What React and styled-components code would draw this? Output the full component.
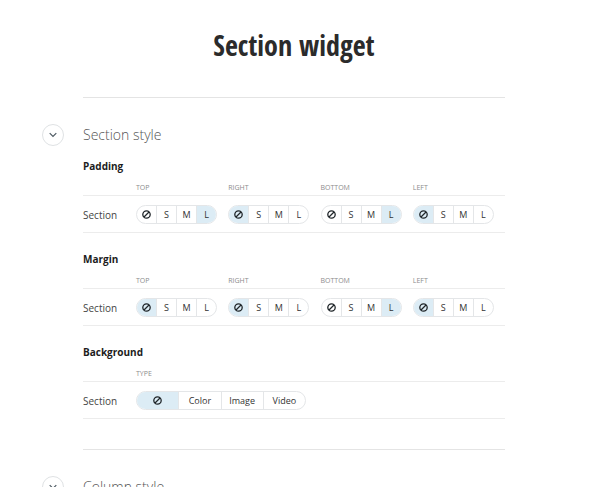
import React, { useState } from "react";
import styled, { createGlobalStyle } from "styled-components";

const SIZES = ["none", "S", "M", "L"];
const TYPES = ["none", "Color", "Image", "Video"];
const SIDES = ["Top", "Right", "Bottom", "Left"];

const App = () => {
  return (
    <>
      <GlobalStyle />
      <Page>
        <Title>Section widget</Title>
        <Section title="Section style">
          <StyleTable
            title="Padding"
            columns={SIDES}
            options={SIZES}
            initial={["L", "none", "L", "none"]}
          />
          <StyleTable
            title="Margin"
            columns={SIDES}
            options={SIZES}
            initial={["none", "none", "L", "none"]}
          />
          <StyleTable
            title="Background"
            columns={["Type"]}
            options={TYPES}
            initial={["none"]}
            wide
          />
        </Section>
        <Section title="Column style" />
      </Page>
    </>
  );
};

export default App;

const Section = ({ title, children }) => {
  const [isOpen, setIsOpen] = useState(true);

  return (
    <SectionContainer>
      <SectionHeader>
        <Toggle
          type="button"
          aria-label={title}
          aria-expanded={isOpen}
          onClick={() => setIsOpen(!isOpen)}
        >
          <svg width="8" height="6" viewBox="0 0 8 6" fill="none">
            <path d="M0.7 1.2L4 4.5L7.3 1.2" stroke="#4d5a62" strokeWidth="1.2" />
          </svg>
        </Toggle>
        <SectionTitle>{title}</SectionTitle>
      </SectionHeader>
      {isOpen && children}
    </SectionContainer>
  );
};

const StyleTable = ({ title, columns, options, initial, wide }) => {
  const [values, setValues] = useState(initial);

  const onChange = (index, value) =>
    setValues(values.map((v, i) => (i === index ? value : v)));

  return (
    <Group>
      <GroupTitle>{title}</GroupTitle>
      <Table>
        <thead>
          <tr>
            <CornerCell />
            {columns.map((column) => (
              <HeadCell key={column} scope="col">
                {column}
              </HeadCell>
            ))}
          </tr>
        </thead>
        <tbody>
          <tr>
            <RowLabel scope="row">Section</RowLabel>
            {columns.map((column, index) => (
              <Cell key={column}>
                <Segments
                  role="radiogroup"
                  aria-label={`${title} ${column}`}
                  $wide={wide}
                >
                  {options.map((option) => (
                    <Segment key={option}>
                      <Radio
                        type="radio"
                        name={`${title}-${column}`}
                        value={option}
                        aria-label={option}
                        checked={values[index] === option}
                        onChange={() => onChange(index, option)}
                      />
                      {option === "none" ? <NoneIcon /> : option}
                    </Segment>
                  ))}
                </Segments>
              </Cell>
            ))}
          </tr>
        </tbody>
      </Table>
    </Group>
  );
};

const NoneIcon = () => (
  <svg width="9" height="9" viewBox="0 0 9 9" fill="none" stroke="#20262a">
    <circle cx="4.5" cy="4.5" r="3.7" strokeWidth="1.3" />
    <path d="M2 7L7 2" strokeWidth="1.3" />
  </svg>
);

const GlobalStyle = createGlobalStyle`
  * {
    box-sizing: border-box;
  }

  html {
    scrollbar-width: none;
  }

  body {
    margin: 0;
    background: #fff;
    color: #2b2b2b;
    font-family: "Open Sans", "Noto Sans", sans-serif;
  }
`;

const Page = styled.main`
  padding: 23px 95px 24px 83px;
`;

const Title = styled.h1`
  margin: 0 0 30px;

  font-family: "Open Sans Condensed", "Noto Sans Condensed", "Open Sans", sans-serif;
  font-size: 28px;
  font-weight: 700;
  line-height: 44px;
  text-align: center;
  white-space: nowrap;
`;

const SectionContainer = styled.section`
  padding: 26px 0 30px;
  border-top: 1px solid #e4e4e4;
`;

const SectionHeader = styled.div`
  margin-left: -41px;

  display: flex;
  align-items: center;
  gap: 19px;
`;

const Toggle = styled.button`
  width: 22px;
  height: 22px;
  padding: 0;
  border: 1px solid #dfe2e4;
  border-radius: 50%;
  background: #fff;

  display: flex;
  align-items: center;
  justify-content: center;
`;

const SectionTitle = styled.h2`
  margin: 0;

  font-size: 14px;
  font-weight: 300;
  line-height: 20px;
  color: #555;
`;

const Group = styled.div`
  margin-top: 10px;

  & + & {
    margin-top: 16px;
  }
`;

const GroupTitle = styled.h3`
  margin: 0;

  font-size: 10px;
  font-weight: 700;
  line-height: 20px;
  color: #1c1c1c;
`;

const Table = styled.table`
  width: 100%;
  table-layout: fixed;
  border-spacing: 0;

  th,
  td {
    border-bottom: 1px solid #ececec;
    text-align: left;
  }
`;

const CornerCell = styled.td`
  width: 53px;
  padding: 0;
`;

const HeadCell = styled.th`
  height: 20px;
  padding: 4px 0 0;

  font-size: 7px;
  font-weight: 400;
  line-height: 15px;
  text-transform: uppercase;
  color: #8c8c8c;
`;

const RowLabel = styled.th`
  height: 37px;
  padding: 2px 0 0;

  font-size: 10px;
  font-weight: 400;
  line-height: 20px;
  color: #444;
`;

const Cell = styled.td`
  padding: 0;
  vertical-align: middle;
`;

const Segments = styled.div`
  width: ${({ $wide }) => ($wide ? 170 : 81)}px;
  border: 1px solid #e4e6e8;
  border-radius: 10px;
  overflow: hidden;

  display: flex;
`;

const Segment = styled.label`
  height: 17px;

  display: flex;
  flex: 1 1 0;
  align-items: center;
  justify-content: center;

  font-size: 9px;
  line-height: 17px;
  color: #333;

  & + & {
    border-left: 1px solid #e4e6e8;
  }

  &:has(:checked) {
    background: #dcecf5;
  }
`;

const Radio = styled.input`
  width: 0;
  height: 0;
  margin: 0;
  appearance: none;
`;
